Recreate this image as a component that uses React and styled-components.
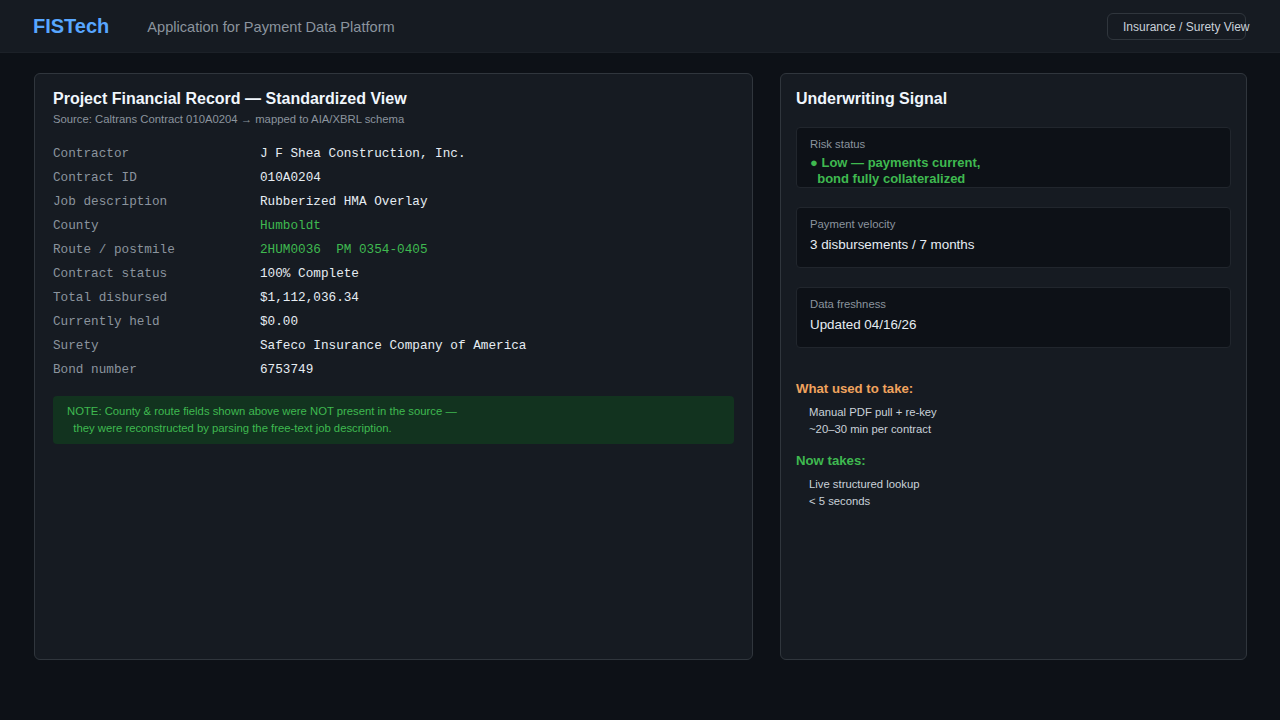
import React from "react";
import styled, { createGlobalStyle } from "styled-components";

const GlobalStyle = createGlobalStyle`
  html, body {
    margin: 0;
    padding: 0;
    background: #0d1117;
    font-family: "Liberation Sans", Arial, sans-serif;
    color: #e6edf3;
  }
  * {
    box-sizing: border-box;
  }
`;

const Page = styled.div`
  width: 1280px;
  height: 720px;
  background: #0d1117;
  overflow: hidden;
`;

const Header = styled.header`
  height: 53px;
  background: #161b22;
  border-bottom: 1px solid #1c2128;
  display: flex;
  align-items: center;
  padding: 0 34px 0 33px;
`;

const Logo = styled.div`
  font-size: 20px;
  font-weight: 700;
  color: #58a6ff;
  margin-right: 38px;
`;

const Subtitle = styled.div`
  font-size: 14.6px;
  color: #8b949e;
  flex: 1;
  padding-top: 2px;
`;

const ViewButton = styled.button`
  width: 139px;
  height: 27px;
  padding: 0 0 0 15px;
  text-align: left;
  white-space: nowrap;
  overflow: visible;
  background: #161b22;
  border: 1px solid #30363d;
  border-radius: 6px;
  color: #c9d1d9;
  font-family: "Liberation Sans", Arial, sans-serif;
  font-size: 12px;
  margin-top: 1px;
`;

const Main = styled.main`
  display: grid;
  grid-template-columns: 1fr 467px;
  gap: 27px;
  padding: 20px 33px 0 34px;
`;

const Panel = styled.section`
  height: 587px;
  background: #161b22;
  border: 1px solid #30363d;
  border-radius: 6px;
  padding: ${(p) => p.$pad};
`;

const PanelTitle = styled.h2`
  margin: 0;
  font-size: 16px;
  line-height: 20px;
  font-weight: 700;
  color: #f0f6fc;
`;

const Source = styled.div`
  font-size: 11.3px;
  line-height: 14px;
  color: #8b949e;
  margin-top: 3px;
`;

const Fields = styled.dl`
  display: grid;
  grid-template-columns: 207px 1fr;
  margin: 16px 0 0;
  font-family: "Liberation Mono", "Courier New", monospace;
  font-size: 12.7px;
  line-height: 24px;
`;

const Label = styled.dt`
  color: #8b949e;
`;

const Value = styled.dd`
  margin: 0;
  white-space: pre;
  color: ${(p) => (p.$derived ? "#3fb950" : "#e6edf3")};
`;

const Note = styled.div`
  margin-top: 14px;
  background: #12331f;
  border-radius: 4px;
  padding: 7px 14px 7px;
  font-size: 11.3px;
  line-height: 17px;
  color: #3fb950;
  white-space: pre;
`;

const SignalCard = styled.div`
  height: 61px;
  margin-top: ${(p) => p.$top || 19}px;
  background: #0d1117;
  border: 1px solid #21262d;
  border-radius: 4px;
  padding: 9px 13px 0;
`;

const CardLabel = styled.div`
  font-size: 11.3px;
  line-height: 14px;
  color: #8b949e;
`;

const CardValue = styled.div`
  margin-top: 5px;
  font-size: 13.4px;
  line-height: 18px;
  color: #e6edf3;
`;

const RiskValue = styled.div`
  margin-top: 4px;
  font-size: 13px;
  line-height: 16px;
  font-weight: 700;
  color: #3fb950;
  white-space: pre;
`;

const SectionHead = styled.h3`
  margin: ${(p) => p.$top}px 0 0;
  font-size: 13.2px;
  line-height: 16px;
  font-weight: 700;
  color: ${(p) => p.$color};
`;

const Detail = styled.div`
  padding-left: 13px;
  margin-top: 7px;
  font-size: 11.3px;
  line-height: 17px;
  color: #c9d1d9;
`;

const fields = [
  ["Contractor", "J F Shea Construction, Inc."],
  ["Contract ID", "010A0204"],
  ["Job description", "Rubberized HMA Overlay"],
  ["County", "Humboldt", true],
  ["Route / postmile", "2HUM0036  PM 0354-0405", true],
  ["Contract status", "100% Complete"],
  ["Total disbursed", "$1,112,036.34"],
  ["Currently held", "$0.00"],
  ["Surety", "Safeco Insurance Company of America"],
  ["Bond number", "6753749"],
];

export default function App() {
  return (
    <Page>
      <GlobalStyle />
      <Header>
        <Logo>FISTech</Logo>
        <Subtitle>Application for Payment Data Platform</Subtitle>
        <ViewButton>Insurance / Surety View</ViewButton>
      </Header>
      <Main>
        <Panel $pad="15px 18px">
          <PanelTitle>Project Financial Record — Standardized View</PanelTitle>
          <Source>Source: Caltrans Contract 010A0204 → mapped to AIA/XBRL schema</Source>
          <Fields>
            {fields.map(([label, value, derived]) => (
              <React.Fragment key={label}>
                <Label>{label}</Label>
                <Value $derived={derived}>{value}</Value>
              </React.Fragment>
            ))}
          </Fields>
          <Note>
            {"NOTE: County & route fields shown above were NOT present in the source —\n  they were reconstructed by parsing the free-text job description."}
          </Note>
        </Panel>
        <Panel $pad="15px 15px">
          <PanelTitle>Underwriting Signal</PanelTitle>
          <SignalCard $top={18}>
            <CardLabel>Risk status</CardLabel>
            <RiskValue>{"● Low — payments current,\n  bond fully collateralized"}</RiskValue>
          </SignalCard>
          <SignalCard>
            <CardLabel>Payment velocity</CardLabel>
            <CardValue>3 disbursements / 7 months</CardValue>
          </SignalCard>
          <SignalCard>
            <CardLabel>Data freshness</CardLabel>
            <CardValue>Updated 04/16/26</CardValue>
          </SignalCard>
          <SectionHead $top={33} $color="#f0a35e">What used to take:</SectionHead>
          <Detail>
            Manual PDF pull + re-key
            <br />
            ~20–30 min per contract
          </Detail>
          <SectionHead $top={15} $color="#3fb950">Now takes:</SectionHead>
          <Detail>
            Live structured lookup
            <br />
            &lt; 5 seconds
          </Detail>
        </Panel>
      </Main>
    </Page>
  );
}
